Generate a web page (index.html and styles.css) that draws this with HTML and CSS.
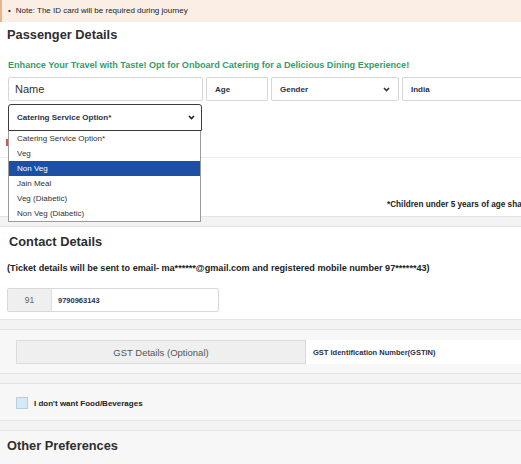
FILE: index.html
```html
<!DOCTYPE html>
<html lang="en">
<head>
    <meta charset="UTF-8">
    <title>Passenger Details</title>
    <link rel="stylesheet" href="styles.css">
</head>

<body>
    <div class="note"><span class="dot">&bull;</span>Note: The ID card will be required during journey</div>

    <div class="card passenger">
        <h2>Passenger Details</h2>
        <p class="promo">Enhance Your Travel with Taste! Opt for Onboard Catering for a Delicious Dining Experience!</p>
        <div class="row">
            <div class="field name">Name</div>
            <div class="field age">Age</div>
            <div class="field gender">Gender
                <svg class="chev" width="7" height="5" viewBox="0 0 7 5"><path d="M1 1l2.5 2.5L6 1" fill="none" stroke="#333" stroke-width="1.6"/></svg>
            </div>
            <div class="field country">India</div>
        </div>
        <div class="catering">
            <div class="select">Catering Service Option*
                <svg class="chev" width="7" height="5" viewBox="0 0 7 5"><path d="M1 1l2.5 2.5L6 1" fill="none" stroke="#222" stroke-width="1.6"/></svg>
            </div>
            <span class="err"></span>
            <ul class="options">
                <li>Catering Service Option*</li>
                <li>Veg</li>
                <li class="active">Non Veg</li>
                <li>Jain Meal</li>
                <li>Veg (Diabetic)</li>
                <li>Non Veg (Diabetic)</li>
            </ul>
        </div>
        <div class="divider"></div>
        <p class="child">*Children under 5 years of age shall not be charged</p>
    </div>

    <div class="band"></div>

    <div class="card contact">
        <h2>Contact Details</h2>
        <p class="ticket">(Ticket details will be sent to email- ma******@gmail.com and registered mobile number 97******43)</p>
        <div class="phone">
            <span class="code">91</span>
            <span class="num">9790963143</span>
        </div>
    </div>

    <div class="band"></div>

    <div class="card grey gst">
        <div class="gst-box">
            <div class="gst-label">GST Details (Optional)</div>
            <div class="gst-input">GST Identification Number(GSTIN)</div>
        </div>
    </div>

    <div class="band"></div>

    <div class="card grey food">
        <label class="check"><span class="box"></span>I don't want Food/Beverages</label>
    </div>

    <div class="band"></div>

    <div class="card grey other">
        <h2>Other Preferences</h2>
    </div>
</body>
</html>
```

FILE: styles.css
```css
body
{
    margin: 0;
    font-family: "Liberation Sans", Arial, sans-serif;
    color: #333;
    background: #fff;
    overflow: hidden;
}
.note
{
    height: 22px;
    line-height: 22px;
    background: #fbeee5;
    border-left: 2px solid #e9b38e;
    padding-left: 6px;
    font-size: 8px;
    color: #222;
}
.note .dot
{
    margin-right: 5px;
}
.card
{
    padding: 0 7px;
    border-bottom: 1px solid #e4e4e4;
}
.band
{
    height: 9px;
    background: #f3f3f3;
    border-bottom: 1px solid #e4e4e4;
}
.grey
{
    background: #f7f7f7;
}
h2
{
    margin: 0;
    font-size: 12.8px;
    line-height: 16px;
    color: #2e2e2e;
}
.passenger h2
{
    padding-top: 5px;
}
.promo
{
    margin: 16px 0 0 1px;
    font-size: 9.1px;
    line-height: 12px;
    font-weight: bold;
    color: #2f9e6a;
    white-space: nowrap;
}
.row
{
    display: flex;
    gap: 3px;
    margin: 6px -7px 0 0;
    padding-left: 1px;
}
.field
{
    flex-shrink: 0;
    height: 22px;
    border: 1px solid #d6d6d6;
    border-radius: 2px;
    display: flex;
    align-items: center;
    padding: 0 8px;
    font-size: 8px;
    font-weight: bold;
    color: #2b2f45;
    box-sizing: content-box;
}
.name
{
    width: 179px;
    font-size: 11px;
    font-weight: normal;
    color: #333;
    padding-left: 6px;
}
.age
{
    width: 44px;
}
.gender
{
    width: 110px;
    justify-content: space-between;
}
.country
{
    flex: 1;
    border-right: none;
    border-radius: 2px 0 0 2px;
}
.catering
{
    position: relative;
    margin-top: 3px;
    padding-left: 1px;
    width: 194px;
    height: 53px;
}
.select
{
    height: 25px;
    border: 1px solid #3a3a3a;
    border-radius: 3px 3px 0 0;
    display: flex;
    align-items: center;
    justify-content: space-between;
    padding: 0 6px 0 8px;
    font-size: 8px;
    font-weight: bold;
    color: #2b2f45;
}
.err
{
    position: absolute;
    left: -1px;
    top: 35px;
    width: 4px;
    height: 7px;
    background: #d9534f;
}
.options
{
    position: absolute;
    left: 1px;
    top: 27px;
    width: 191px;
    margin: 0;
    padding: 0;
    list-style: none;
    background: #fff;
    border: 1px solid #9a9a9a;
    border-top: none;
    z-index: 2;
}
.options li
{
    height: 15px;
    line-height: 15px;
    padding-left: 8px;
    font-size: 8px;
    color: #333;
}
.options .active
{
    background: #1c50a6;
    color: #fff;
}
.divider
{
    margin: 0 -7px;
    border-top: 1px solid #ececec;
}
.child
{
    margin: 41px -7px 0 0;
    padding-bottom: 5px;
    padding-left: 380px;
    font-size: 8.2px;
    line-height: 12px;
    font-weight: bold;
    color: #222;
    white-space: nowrap;
    overflow: hidden;
}
.contact
{
    padding-top: 7px;
    padding-bottom: 7px;
    padding-left: 9px;
}
.ticket
{
    margin: 12px 0 0 -2px;
    font-size: 9.1px;
    line-height: 12px;
    font-weight: bold;
    color: #222;
    white-space: nowrap;
}
.phone
{
    display: flex;
    margin: 14px 0 0 -2px;
    width: 210px;
    height: 22px;
    border: 1px solid #d9d9d9;
    border-radius: 2px;
}
.phone .code
{
    width: 43px;
    background: #efefef;
    border-right: 1px solid #dedede;
    display: flex;
    align-items: center;
    justify-content: center;
    font-size: 8.5px;
    color: #666;
}
.phone .num
{
    display: flex;
    align-items: center;
    padding-left: 6px;
    font-size: 7.5px;
    font-weight: bold;
    color: #2b2f45;
}
.gst
{
    padding: 10px 0 9px 16px;
}
.gst-box
{
    display: flex;
    height: 24px;
}
.gst-label
{
    width: 288px;
    background: #efefef;
    border: 1px solid #dcdcdc;
    display: flex;
    align-items: center;
    justify-content: center;
    font-size: 9.5px;
    color: #555;
}
.gst-input
{
    flex: 1;
    background: #fff;
    display: flex;
    align-items: center;
    padding-left: 7px;
    font-size: 7.5px;
    font-weight: bold;
    color: #2b2f45;
}
.food
{
    padding: 13px 0 11px 16px;
}
.check
{
    display: flex;
    align-items: center;
    font-size: 8px;
    font-weight: bold;
    color: #222;
}
.check .box
{
    width: 10px;
    height: 10px;
    background: #d6e9f6;
    border: 1px solid #b9cfdf;
    margin-right: 6px;
}
.other
{
    padding-top: 7px;
    height: 40px;
    border-bottom: none;
}
```
